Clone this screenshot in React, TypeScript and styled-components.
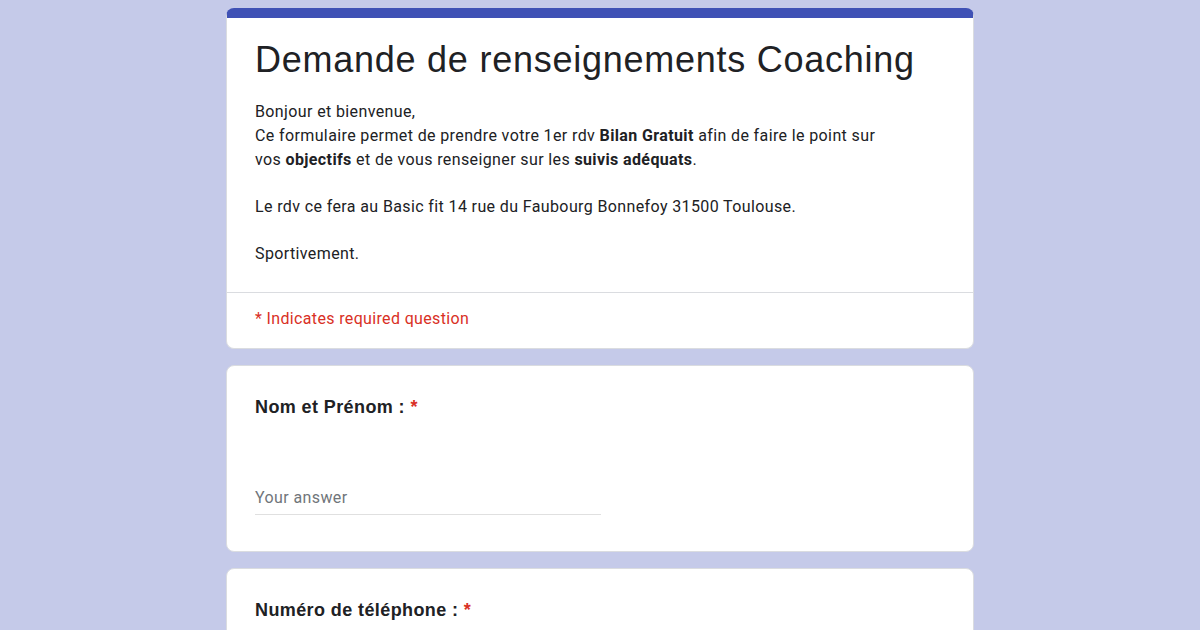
import * as React from "react";
import styled, { createGlobalStyle } from "styled-components";

const GlobalStyle = createGlobalStyle`
  html, body {
    margin: 0;
    padding: 0;
    background-color: #c5cae9;
  }
  * {
    box-sizing: border-box;
  }
`;

const Page = styled.div`
  display: flex;
  flex-direction: column;
  align-items: center;
  gap: 16px;
  padding-top: 8px;
  height: 630px;
  overflow: hidden;
  font-family: Roboto, "Liberation Sans", Arial, sans-serif;
`;

const Card = styled.div<{ $header?: boolean }>`
  flex-shrink: 0;
  width: 748px;
  background-color: #ffffff;
  border-radius: 8px;
  border: 1px solid #dadce0;
  border-top: ${(p) => (p.$header ? "10px solid #3f51b5" : "1px solid #dadce0")};
  overflow: hidden;
`;

const HeaderBody = styled.div`
  padding: 18px 28px 26px 28px;
  border-bottom: 1px solid #dadce0;
`;

const Title = styled.h1`
  margin: 0 0 16px 0;
  font-family: "Liberation Sans", Arial, sans-serif;
  font-size: 36px;
  font-weight: 400;
  letter-spacing: 0.75px;
  line-height: 48px;
  color: #202124;
`;

const Description = styled.div`
  font-size: 16px;
  line-height: 24px;
  letter-spacing: 0.38px;
  color: #202124;

  b {
    font-weight: 700;
  }
`;

const Gap = styled.div`
  height: 23px;
`;

const Required = styled.div`
  padding: 16px 28px 19px 28px;
  font-size: 16px;
  letter-spacing: 0.35px;
  line-height: 20px;
  color: #d93025;
`;

const QuestionBody = styled.div`
  padding: 29px 28px 36px 28px;
`;

const Question = styled.div`
  font-family: "Liberation Sans", Arial, sans-serif;
  font-size: 18px;
  font-weight: 700;
  letter-spacing: 0.4px;
  line-height: 24px;
  color: #202124;
`;

const Star = styled.span`
  color: #d93025;
`;

const Answer = styled.div`
  margin-top: 69px;
  width: 346px;
  padding-bottom: 6px;
  border-bottom: 1px solid #e0e0e0;
  font-size: 16px;
  letter-spacing: 0.4px;
  line-height: 20px;
  color: #70757a;
`;

const App: React.FC = () => {
  return (
    <>
      <GlobalStyle />
      <Page>
        <Card $header>
          <HeaderBody>
            <Title>Demande de renseignements Coaching</Title>
            <Description>
              Bonjour et bienvenue,
              <br />
              Ce formulaire permet de prendre votre 1er rdv <b>Bilan Gratuit</b> afin de faire le point sur
              <br />
              vos <b>objectifs</b> et de vous renseigner sur les <b>suivis adéquats</b>.
              <Gap />
              Le rdv ce fera au Basic fit 14 rue du Faubourg Bonnefoy 31500 Toulouse.
              <Gap />
              Sportivement.
            </Description>
          </HeaderBody>
          <Required>* Indicates required question</Required>
        </Card>
        <Card>
          <QuestionBody>
            <Question>
              Nom et Prénom : <Star>*</Star>
            </Question>
            <Answer>Your answer</Answer>
          </QuestionBody>
        </Card>
        <Card>
          <QuestionBody>
            <Question>
              Numéro de téléphone : <Star>*</Star>
            </Question>
            <Answer>Your answer</Answer>
          </QuestionBody>
        </Card>
      </Page>
    </>
  );
};

export default App;
